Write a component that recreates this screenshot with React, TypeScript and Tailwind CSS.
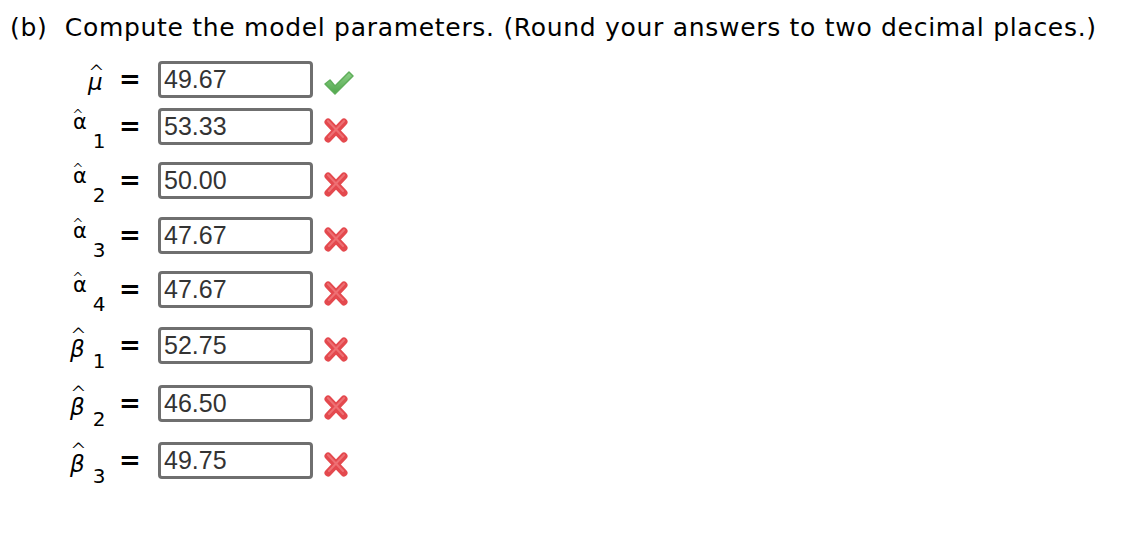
const ROWS = [
  { sym: "mu", sub: "", value: "49.67", ok: true, h: "h-[47px]" },
  { sym: "alpha", sub: "1", value: "53.33", ok: false, h: "h-[54px]" },
  { sym: "alpha", sub: "2", value: "50.00", ok: false, h: "h-[55px]" },
  { sym: "alpha", sub: "3", value: "47.67", ok: false, h: "h-[54px]" },
  { sym: "alpha", sub: "4", value: "47.67", ok: false, h: "h-[56px]" },
  { sym: "beta", sub: "1", value: "52.75", ok: false, h: "h-[58px]" },
  { sym: "beta", sub: "2", value: "46.50", ok: false, h: "h-[57px]" },
  { sym: "beta", sub: "3", value: "49.75", ok: false, h: "h-[37px]" },
];

const sans = "font-['DejaVu_Sans',Verdana,sans-serif]";

// Symbol with a circumflex hat and an optional subscript, typeset in flow.
function Label({ sym, sub }: { sym: string; sub: string }) {
  if (sym === "mu") {
    return (
      <div className={`w-[42px] h-[37px] flex items-start pl-[20px] pt-[10px] ${sans} text-black`}>
        <span className="relative text-[23px] leading-none italic">
          <span className="absolute left-[0px] top-[-9px] text-[20px] leading-none not-italic font-light">^</span>
          μ
        </span>
      </div>
    );
  }
  if (sym === "alpha") {
    return (
      <div className={`w-[42px] h-[37px] flex items-start pl-[5px] pt-[4px] ${sans} text-black`}>
        <span className="relative text-[21px] leading-none">
          <span className="absolute left-[-1px] top-[-4px] text-[14px] leading-none font-light">^</span>
          α
        </span>
        <span className="ml-[6px] mt-[19px] text-[20px] leading-none">{sub}</span>
      </div>
    );
  }
  return (
    <div className={`w-[42px] h-[37px] flex items-start pl-[2px] pt-[11px] ${sans} text-black`}>
      <span className="relative text-[23px] leading-none italic">
        <span className="absolute left-[0px] top-[-13px] text-[20px] leading-none not-italic font-light">^</span>
        β
      </span>
      <span className="ml-[8px] mt-[13px] text-[20px] leading-none">{sub}</span>
    </div>
  );
}

function Check() {
  return (
    <svg width="32" height="26" viewBox="0 0 32 26">
      <defs>
        <linearGradient id="g" x1="0" y1="0" x2="0" y2="1">
          <stop offset="0" stopColor="#8fd08a" />
          <stop offset="1" stopColor="#4fa64a" />
        </linearGradient>
      </defs>
      <path
        d="M2 14 L7 10 L12 16 L26 2 L30 6 L12 24 Z"
        fill="url(#g)"
        stroke="#5fae5a"
        strokeWidth="1.5"
        strokeLinejoin="round"
      />
    </svg>
  );
}

function Cross() {
  return (
    <svg width="26" height="27" viewBox="0 0 26 27">
      <g stroke="#e4494e" strokeWidth="7" strokeLinecap="round">
        <line x1="5" y1="5" x2="21" y2="22" />
        <line x1="21" y1="5" x2="5" y2="22" />
      </g>
      <g stroke="#f58a8d" strokeWidth="2" strokeLinecap="round" opacity="0.6">
        <line x1="5" y1="4" x2="20" y2="20" />
        <line x1="21" y1="4" x2="6" y2="20" />
      </g>
    </svg>
  );
}

export default function App() {
  return (
    <div className="w-[1126px] h-[536px] bg-white">
      <h1
        className={`${sans} text-[25px] leading-none tracking-[0.7px] text-black pt-[15px] pl-[10px] whitespace-pre`}
      >
        {"(b)  Compute the model parameters. (Round your answers to two decimal places.)"}
      </h1>
      <div className="pl-[68px] pt-[21px] flex flex-col">
        {ROWS.map((r, i) => (
          <div key={i} className={`flex items-start ${r.h}`}>
            <Label sym={r.sym} sub={r.sub} />
            <div
              className={`w-[40px] h-[35px] flex items-center justify-center ${sans} text-[26px] font-semibold leading-none text-black`}
            >
              =
            </div>
            <div className="ml-[8px] w-[155px] h-[37px] border-[3px] border-[#6f6f6f] rounded-[4px] flex items-center pl-[3px] font-['Liberation_Sans',Arial,sans-serif] text-[25px] text-[#333]">
              {r.value}
            </div>
            <div className="ml-[10px] h-[37px] pt-[9px] flex items-start">
              {r.ok ? <Check /> : <Cross />}
            </div>
          </div>
        ))}
      </div>
    </div>
  );
}
